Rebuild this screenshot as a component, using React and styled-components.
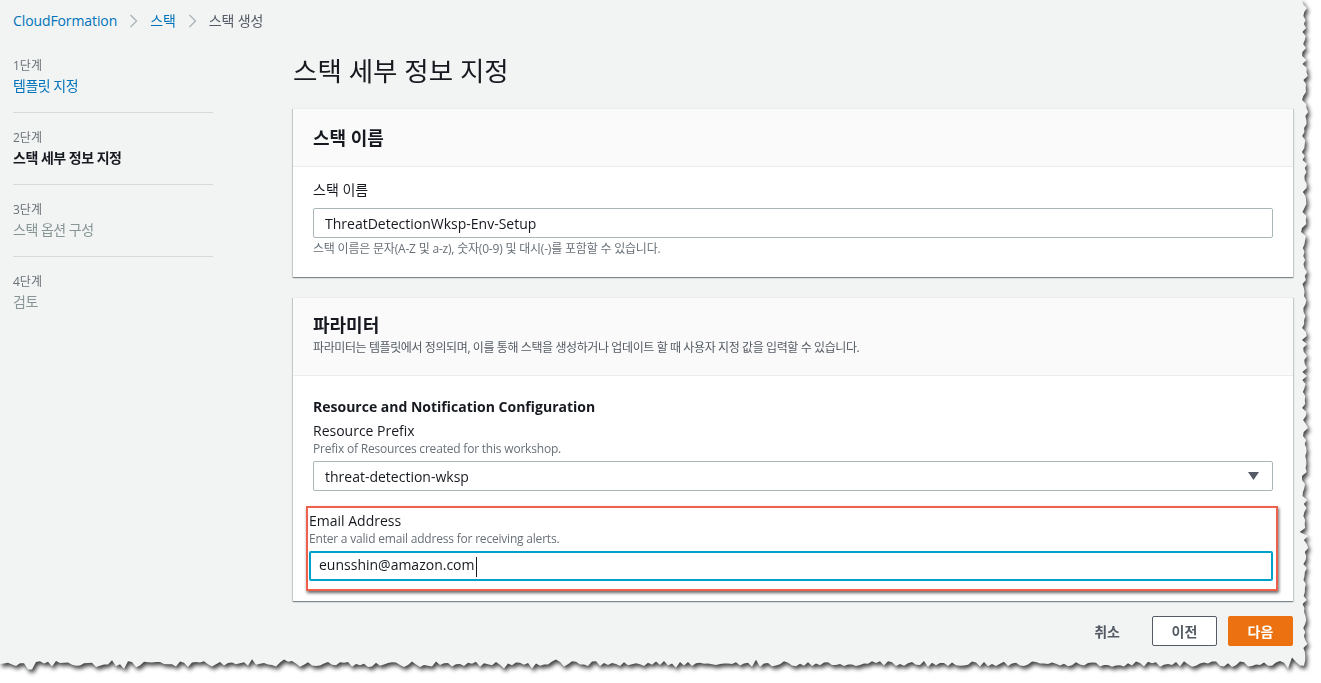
import React from 'react';
import styled, { createGlobalStyle } from 'styled-components';

const GlobalStyle = createGlobalStyle`
  html, body {
    margin: 0;
    padding: 0;
    background: #ffffff;
    overflow: hidden;
  }
  * { box-sizing: border-box; }
`;

const FONT = `"Open Sans", "Noto Sans CJK KR", sans-serif`;

// torn paper edge, built once from a seeded noise so every run looks the same
const buildTornEdge = () => {
  let seed = 11;
  const rand = () => {
    seed = (seed * 16807) % 2147483647;
    return seed / 2147483647;
  };
  const pts = ['0px 0px', '1302px 0px'];
  for (let y = 4; y < 662; y += 4) {
    const bump = rand() < 0.12 ? (rand() - 0.5) * 8 : 0;
    pts.push(`${(1302 + rand() * 5 + bump).toFixed(1)}px ${y}px`);
  }
  for (let x = 1304; x >= 0; x -= 4) {
    const bump = rand() < 0.12 ? (rand() - 0.5) * 8 : 0;
    pts.push(`${x}px ${(661 + rand() * 6 + bump).toFixed(1)}px`);
  }
  return `polygon(${pts.join(', ')})`;
};

const Stage = styled.div`
  width: 1321px;
  height: 683px;
  background: #ffffff;
  font-family: ${FONT};
`;

const ShadowWrap = styled.div`
  width: 1316px;
  height: 678px;
  filter: drop-shadow(2px 3px 2px rgba(0, 0, 0, 0.75));
`;

const Sheet = styled.div`
  width: 1316px;
  height: 678px;
  background: #f2f3f3;
  clip-path: ${p => p.$clip};
  padding: 11px 0 0 13px;
`;

const Breadcrumbs = styled.nav`
  display: flex;
  align-items: center;
  gap: 12px;
  height: 20px;
  font-size: 14px;
  line-height: 20px;
  letter-spacing: -0.1px;
`;

const Crumb = styled.span`
  color: ${p => (p.$link ? '#0073bb' : '#545b64')};
`;

const Chevron = () => (
  <svg width="9" height="14" viewBox="0 0 9 14">
    <polyline points="1.5,1 7.5,7 1.5,13" fill="none" stroke="#aab7b8" strokeWidth="1.4" />
  </svg>
);

const Layout = styled.div`
  display: grid;
  grid-template-columns: 200px 1000px;
  column-gap: 80px;
  align-items: start;
`;

const Steps = styled.ol`
  list-style: none;
  margin: 10px 0 0;
  padding: 0;
`;

const Step = styled.li`
  padding: 17px 0 16px;
  border-bottom: ${p => (p.$last ? 'none' : '1px solid #d5dbdb')};
  display: flex;
  flex-direction: column;
  gap: 2px;
`;

const StepNo = styled.span`
  font-size: 12px;
  line-height: 16px;
  color: #687078;
`;

const StepName = styled.span`
  font-size: 14px;
  line-height: 20px;
  letter-spacing: -0.5px;
  color: ${p => (p.$state === 'done' ? '#0073bb' : p.$state === 'current' ? '#16191f' : '#879596')};
  font-weight: ${p => (p.$state === 'current' ? 700 : 400)};
`;

const Main = styled.main`
  padding-top: 24px;
  display: flex;
  flex-direction: column;
`;

const Title = styled.h1`
  margin: 0 0 21px;
  font-size: 26.5px;
  line-height: 32px;
  font-weight: 400;
  color: #16191f;
`;

const Card = styled.section`
  background: #ffffff;
  box-shadow: 0 1px 1px 0 rgba(0, 28, 36, 0.3), 1px 1px 1px 0 rgba(0, 28, 36, 0.15),
    -1px 1px 1px 0 rgba(0, 28, 36, 0.15);
  border-top: 1px solid #eaeded;
  margin-bottom: 20px;
`;

const CardHeader = styled.header`
  background: #fafafa;
  border-bottom: 1px solid #eaeded;
  padding: ${p => p.$pad || '0 20px'};
  min-height: 58px;
  display: flex;
  flex-direction: column;
  justify-content: center;
`;

const CardTitle = styled.h2`
  margin: 0;
  font-size: 18px;
  line-height: 24px;
  font-weight: 700;
  color: #16191f;
`;

const CardDesc = styled.p`
  margin: 3px 0 0;
  font-size: 12px;
  line-height: 16px;
  letter-spacing: -0.4px;
  color: #545b64;
`;

const CardBody = styled.div`
  padding: ${p => p.$pad};
  display: flex;
  flex-direction: column;
`;

const GroupTitle = styled.h3`
  margin: 0 0 4px;
  font-size: 14px;
  line-height: 20px;
  font-weight: 700;
  color: #16191f;
`;

const Label = styled.div`
  font-size: 14px;
  line-height: 20px;
  color: #16191f;
`;

const Hint = styled.div`
  font-size: 12px;
  line-height: 16px;
  letter-spacing: -0.2px;
  color: #687078;
  margin: ${p => p.$margin || '0'};
`;

const InputBox = styled.div`
  height: 30px;
  display: flex;
  align-items: center;
  justify-content: space-between;
  background: #ffffff;
  border: ${p => (p.$focus ? '2px solid #00a1c9' : '1px solid #aab7b8')};
  border-radius: 2px;
  padding: ${p => (p.$focus ? '0 16px 0 8px' : '0 13px 0 11px')};
  margin-top: ${p => p.$mt || '0'};
  font-size: 14px;
  color: #16191f;
`;

const Caret = styled.span`
  display: inline-block;
  width: 1px;
  height: 20px;
  background: #16191f;
  vertical-align: middle;
  margin-left: 1px;
`;

const Triangle = () => (
  <svg width="11" height="8" viewBox="0 0 11 8">
    <polygon points="0,0 11,0 5.5,8" fill="#545b64" />
  </svg>
);

const Callout = styled.div`
  margin: 15px -5px 0 -7px;
  border: 2px solid #f0604d;
  box-shadow: 1px 2px 3px rgba(0, 0, 0, 0.6);
  padding: 3px 3px 8px 1px;
  display: flex;
  flex-direction: column;
`;

const Actions = styled.div`
  display: flex;
  justify-content: flex-end;
  align-items: center;
  gap: 11px;
  margin-top: -5px;
`;

const Button = styled.button`
  height: 30px;
  min-width: ${p => (p.$variant === 'link' ? '0' : '65px')};
  padding: 0 ${p => (p.$variant === 'link' ? '20px' : '18px')};
  border-radius: 2px;
  font-family: ${FONT};
  font-size: 14px;
  font-weight: 700;
  cursor: pointer;
  border: ${p =>
    p.$variant === 'primary' ? '1px solid #ec7211' : p.$variant === 'link' ? '1px solid transparent' : '1px solid #545b64'};
  background: ${p => (p.$variant === 'primary' ? '#ec7211' : p.$variant === 'link' ? 'transparent' : '#ffffff')};
  color: ${p => (p.$variant === 'primary' ? '#ffffff' : '#545b64')};
`;

const steps = [
  { no: '1단계', name: '템플릿 지정', state: 'done' },
  { no: '2단계', name: '스택 세부 정보 지정', state: 'current' },
  { no: '3단계', name: '스택 옵션 구성', state: 'todo' },
  { no: '4단계', name: '검토', state: 'todo' }
];

const clip = buildTornEdge();

export default function App() {
  return (
    <Stage>
      <GlobalStyle />
      <ShadowWrap>
        <Sheet $clip={clip}>
          <Breadcrumbs>
            <Crumb $link>CloudFormation</Crumb>
            <Chevron />
            <Crumb $link>스택</Crumb>
            <Chevron />
            <Crumb>스택 생성</Crumb>
          </Breadcrumbs>

          <Layout>
            <Steps>
              {steps.map((s, i) => (
                <Step key={s.no} $last={i === steps.length - 1}>
                  <StepNo>{s.no}</StepNo>
                  <StepName $state={s.state}>{s.name}</StepName>
                </Step>
              ))}
            </Steps>

            <Main>
              <Title>스택 세부 정보 지정</Title>

              <Card>
                <CardHeader>
                  <CardTitle>스택 이름</CardTitle>
                </CardHeader>
                <CardBody $pad="13px 20px 20px">
                  <Label>스택 이름</Label>
                  <InputBox $mt="8px">ThreatDetectionWksp-Env-Setup</InputBox>
                  <Hint $margin="3px 0 0">
                    스택 이름은 문자(A-Z 및 a-z), 숫자(0-9) 및 대시(-)를 포함할 수 있습니다.
                  </Hint>
                </CardBody>
              </Card>

              <Card>
                <CardHeader $pad="15px 20px 19px">
                  <CardTitle>파라미터</CardTitle>
                  <CardDesc>
                    파라미터는 템플릿에서 정의되며, 이를 통해 스택을 생성하거나 업데이트 할 때 사용자 지정 값을 입력할 수 있습니다.
                  </CardDesc>
                </CardHeader>
                <CardBody $pad="21px 20px 10px">
                  <GroupTitle>Resource and Notification Configuration</GroupTitle>
                  <Label>Resource Prefix</Label>
                  <Hint>Prefix of Resources created for this workshop.</Hint>
                  <InputBox $mt="4px">
                    <span>threat-detection-wksp</span>
                    <Triangle />
                  </InputBox>

                  <Callout>
                    <Label>Email Address</Label>
                    <Hint>Enter a valid email address for receiving alerts.</Hint>
                    <InputBox $focus $mt="4px">
                      <span>
                        eunsshin@amazon.com
                        <Caret />
                      </span>
                    </InputBox>
                  </Callout>
                </CardBody>
              </Card>

              <Actions>
                <Button $variant="link">취소</Button>
                <Button>이전</Button>
                <Button $variant="primary">다음</Button>
              </Actions>
            </Main>
          </Layout>
        </Sheet>
      </ShadowWrap>
    </Stage>
  );
}
